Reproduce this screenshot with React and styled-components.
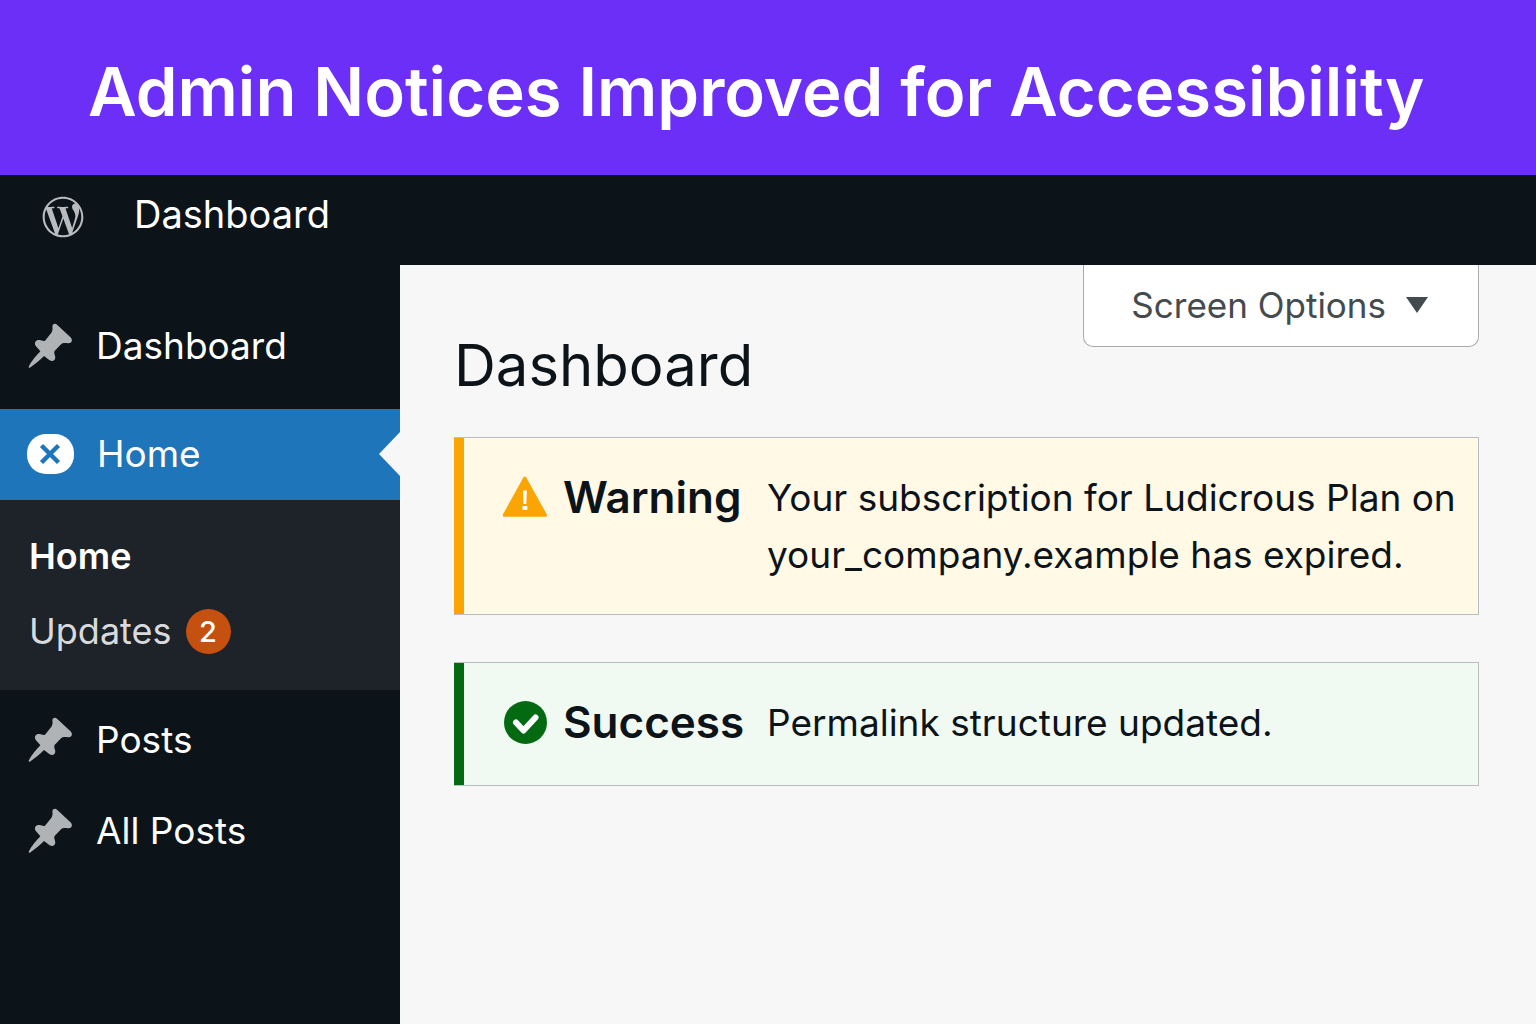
import React from 'react'
import styled, {createGlobalStyle} from 'styled-components'
import {FaWordpressSimple} from 'react-icons/fa'

const GlobalStyle = createGlobalStyle`
  * {
    box-sizing: border-box;
  }
  body {
    margin: 0;
    font-family: Inter, "Liberation Sans", sans-serif;
    color: #0c1319;
    background-color: #f7f7f7;
  }
  a {
    color: inherit;
    text-decoration: none;
  }
  ul {
    margin: 0;
    padding: 0;
    list-style: none;
  }
`
const Page = styled.div`
  min-height: 100vh;
  display: flex;
  flex-direction: column;
`
const Banner = styled.header`
  padding: 50px 88px 41px;
  background-color: #6b2ff8;
  color: #fff;
  font-size: 67px;
  font-weight: 600;
  line-height: 84px;
`
const AdminBar = styled.nav`
  display: flex;
  align-items: center;
  gap: 50px;
  height: 90px;
  padding: 0 42px 12px;
  background-color: #0c1319;
  color: #fff;
  font-size: 38px;
  .logo {
    display: flex;
    margin-top: 6px;
    color: #b9bcbf;
    font-size: 42px;
  }
`
const Body = styled.div`
  flex: 1;
  display: flex;
`
const Sidebar = styled.nav`
  flex: none;
  width: 400px;
  padding-top: 36px;
  background-color: #0c1319;
  color: #fff;
`
const MenuItem = styled.li`
  a {
    position: relative;
    display: flex;
    align-items: center;
    gap: 23px;
    height: 91px;
    padding: 0 27px 2px;
    font-size: 37px;
    background-color: ${props => props.$active ? '#1f75b9' : 'transparent'};
  }
  a:after {
    content: '';
    display: ${props => props.$active ? 'block' : 'none'};
    position: absolute;
    right: 0;
    top: 50%;
    margin-top: -23px;
    border: 22px solid transparent;
    border-left-width: 0;
    border-right: 21px solid #f7f7f7;
  }
  svg {
    flex: none;
  }
`
const MenuGroup = styled.li`
  margin: 17px 0 5px;
`
const SubMenu = styled.ul`
  display: flex;
  flex-direction: column;
  gap: 26px;
  padding: 32px 29px 34px;
  background-color: #1e2229;
`
const SubItem = styled.li`
  a {
    display: flex;
    align-items: center;
    gap: 14px;
    font-size: 36px;
    line-height: 49px;
    font-weight: ${props => props.$current ? 600 : 400};
    color: ${props => props.$current ? '#fff' : '#d9dadc'};
  }
`
const Count = styled.span`
  width: 45px;
  height: 45px;
  border-radius: 50%;
  background-color: #c5500f;
  color: #fff;
  font-size: 29px;
  font-weight: 500;
  line-height: 46px;
  text-align: center;
`
const Content = styled.main`
  flex: 1;
  min-width: 0;
  padding: 0 57px 40px 54px;
`
const TopRow = styled.div`
  display: flex;
  align-items: flex-start;
  justify-content: space-between;
  margin-bottom: 33px;
`
const Title = styled.h1`
  margin: 61px 0 0;
  font-size: 58px;
  font-weight: 400;
  line-height: 78px;
`
const ScreenOptions = styled.button`
  display: flex;
  align-items: center;
  gap: 20px;
  height: 82px;
  padding: 0 50px 2px 47px;
  border: 1px solid #a9aab0;
  border-top: 0;
  border-radius: 0 0 10px 10px;
  background-color: #fff;
  color: #444b4e;
  font-family: inherit;
  font-size: 35px;
`
const tones = {
    warning: {bar: '#fba504', bg: '#fff9e6'},
    success: {bar: '#046a12', bg: '#f1faf2'}
}
const NoticeBox = styled.section`
  display: flex;
  min-height: 124px;
  margin-bottom: 47px;
  padding: 31px 16px 31px 48px;
  border: 1px solid #bbbcc0;
  border-left: 0;
  box-shadow: inset 10px 0 ${props => tones[props.$type].bar};
  background-color: ${props => tones[props.$type].bg};
  line-height: 57px;
  h2 {
    flex: none;
    width: 204px;
    margin: 0 0 0 15px;
    font-size: 44px;
    font-weight: 600;
    line-height: inherit;
  }
  p {
    flex: 1;
    margin: 0;
    font-size: 37px;
  }
  svg {
    flex: none;
    margin-top: 6px;
  }
`

const PinIcon = () => (
    <svg width="46" height="46" viewBox="0 0 46 46" fill="#b0b3b6" aria-hidden="true">
        <path
            d="M29.800 1.400C27.800-.2 25.200 1 25.400 3.600C25.800 6.200 25.400 8.200 24 10.200L18.200 17.400C16.800 18.600 14.800 17.400 12.600 17C8.600 16.400 6.600 20 8.800 23L13.400 28.200C10 31.600 4.400 38 1.800 43.400C1.400 44.600 2 45 3.200 44.400C8 41.400 13.200 36.600 17 33L22.600 37.200C25.600 39.200 28.800 37.200 28.200 33.800C28 31.800 26.600 29.800 27.600 28L33.800 21.400C35.600 19.600 38.400 19.800 40.800 20.200C44.400 20.800 46 17.400 44 14.800Z"/>
    </svg>
)

const HomeIcon = () => (
    <svg width="47" height="40" viewBox="0 0 47 40" aria-hidden="true">
        <rect width="47" height="40" rx="19" fill="#fff"/>
        <path d="M14.500 11.500L31.500 28.500M31.500 11.500L14.500 28.500" stroke="#1f75b9" strokeWidth="4.500"/>
    </svg>
)

const WarningIcon = () => (
    <svg width="46" height="44" viewBox="0 0 46 44" aria-hidden="true">
        <path d="M22.800 3L43.500 40.200H2.200Z" fill="#fba504" stroke="#fba504" strokeWidth="3" strokeLinejoin="round"/>
        <path d="M21 15.500h3.800l-.5 13.500h-2.800Z" fill="#fff"/>
        <rect x="20.400" y="31" width="5" height="4" rx="1" fill="#fff"/>
    </svg>
)

const SuccessIcon = () => (
    <svg width="46" height="44" viewBox="0 0 46 44" aria-hidden="true">
        <circle cx="23.500" cy="22.500" r="21.500" fill="#046a12"/>
        <path d="M14 22.500L21.500 30.500L33.500 17.500" fill="none" stroke="#fff" strokeWidth="6" strokeLinecap="round"
              strokeLinejoin="round"/>
    </svg>
)

const Notice = ({type, title, children}) => (
    <NoticeBox $type={type}>
        {type === 'warning' ? <WarningIcon/> : <SuccessIcon/>}
        <h2>{title}</h2>
        <p>{children}</p>
    </NoticeBox>
)

const PinItem = ({children}) => (
    <MenuItem>
        <a href="#"><PinIcon/>{children}</a>
    </MenuItem>
)

export default function App() {
    return <Page>
        <GlobalStyle/>
        <Banner>Admin Notices Improved for Accessibility</Banner>
        <AdminBar>
            <a className="logo" href="#" aria-label="WordPress"><FaWordpressSimple/></a>
            <a href="#">Dashboard</a>
        </AdminBar>
        <Body>
            <Sidebar>
                <ul>
                    <PinItem>Dashboard</PinItem>
                    <MenuGroup>
                        <MenuItem as="div" $active>
                            <a href="#"><HomeIcon/>Home</a>
                        </MenuItem>
                        <SubMenu>
                            <SubItem $current><a href="#">Home</a></SubItem>
                            <SubItem><a href="#">Updates<Count>2</Count></a></SubItem>
                        </SubMenu>
                    </MenuGroup>
                    <PinItem>Posts</PinItem>
                    <PinItem>All Posts</PinItem>
                </ul>
            </Sidebar>
            <Content>
                <TopRow>
                    <Title>Dashboard</Title>
                    <ScreenOptions type="button">
                        Screen Options
                        <svg width="22" height="16" viewBox="0 0 22 16" fill="#444b4e" aria-hidden="true">
                            <path d="M0 0h22L11 16Z"/>
                        </svg>
                    </ScreenOptions>
                </TopRow>
                <Notice type="warning" title="Warning">
                    Your subscription for Ludicrous Plan on your_company.example has expired.
                </Notice>
                <Notice type="success" title="Success">Permalink structure updated.</Notice>
            </Content>
        </Body>
    </Page>
}
